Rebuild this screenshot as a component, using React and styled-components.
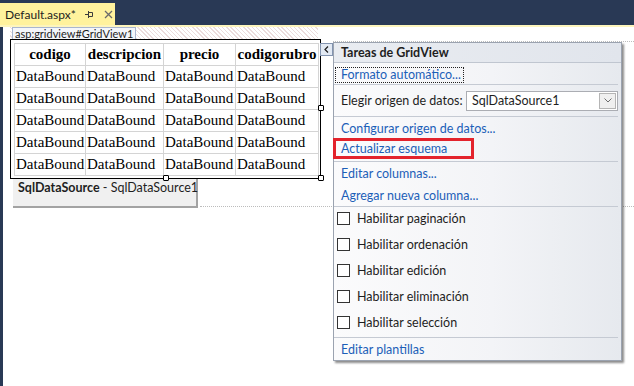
import React from 'react';
import styled, { createGlobalStyle } from 'styled-components';

const colors = {
  chrome: '#293955',
  tab: '#fff29d',
  link: '#1c5fb8',
  text: '#1e1e1e',
  cellBorder: '#d4d4d4',
  sep: '#c5cad3',
};

const uiFont = `Lato, "Noto Sans", sans-serif`;

const GlobalStyle = createGlobalStyle`
  html, body {
    margin: 0;
    padding: 0;
    background: #fff;
  }
  body {
    font-family: ${uiFont};
    width: 634px;
    height: 386px;
    overflow: hidden;
  }
`;

const Window = styled.div`
  width: 634px;
  height: 386px;
  display: flex;
  flex-direction: column;
  background: #fff;
`;

const TitleStrip = styled.div`
  height: 25px;
  background: ${colors.chrome};
  display: flex;
  align-items: flex-end;
`;

const Tab = styled.div`
  height: 22px;
  width: 115px;
  box-sizing: border-box;
  background: ${colors.tab};
  display: flex;
  align-items: center;
  padding: 0 0 0 5px;
  font-size: 12px;
  color: ${colors.text};
  white-space: nowrap;
`;

const TabTitle = styled.span`
  margin-right: 9px;
`;

const TabIcon = styled.svg`
  display: block;
  margin-right: ${p => p.gap || 0}px;
`;

const TabRule = styled.div`
  height: 2px;
  background: #fdf5bd;
`;

const Surface = styled.div`
  flex: 1;
  position: relative;
  border-left: 3px solid ${colors.chrome};
  padding-left: 7px;
`;

const Hatch = styled.div`
  width: 308px;
  height: 12px;
  background: repeating-linear-gradient(
    45deg,
    #fff 0px,
    #fff 2px,
    #ecdcdc 2px,
    #ecdcdc 3px
  );
`;

const ControlTag = styled.div`
  display: inline-block;
  margin-left: 2px;
  height: 12px;
  box-sizing: border-box;
  padding: 0 2px 0 2px;
  background: #f4f6fa;
  border: 1px solid #a9b6cf;
  border-bottom: none;
  font-size: 11px;
  line-height: 11px;
  color: ${colors.text};
  vertical-align: top;
  white-space: nowrap;
`;

const FrameRow = styled.div`
  display: flex;
`;

const Frame = styled.div`
  position: relative;
  width: 311px;
  box-sizing: border-box;
  border: 1px solid #000;
  padding: 3px 3px 2px 3px;
`;

const Filler = styled.div`
  flex: 1;
  margin-top: 2px;
  margin-left: 12px;
  border-top: 1px dotted #bcbcbc;
`;

const Handle = styled.div`
  position: absolute;
  width: 6px;
  height: 6px;
  box-sizing: border-box;
  background: #fff;
  border: 1px solid #000;
  border-radius: 1px;
  left: ${p => p.x}px;
  top: ${p => p.y}px;
`;

const Grid = styled.table`
  border-collapse: collapse;
  table-layout: fixed;
  width: 304px;
  font-family: "Liberation Serif", "Times New Roman", serif;
  font-size: 15px;
  color: #000;
`;

const HeadCell = styled.th`
  border: 1px solid ${colors.cellBorder};
  height: 21px;
  padding: 0;
  text-align: center;
  font-weight: bold;
  white-space: nowrap;
  overflow: visible;
`;

const Cell = styled.td`
  border: 1px solid ${colors.cellBorder};
  height: 21px;
  padding: 0 0 0 1px;
  text-align: left;
  white-space: nowrap;
  overflow: visible;
`;

const SourceRow = styled.div`
  display: flex;
`;

const SourceBox = styled.div`
  margin-left: 3px;
  width: 185px;
  height: 29px;
  box-sizing: border-box;
  background: #f0f0f0;
  border-right: 2px solid #a3a3a3;
  border-bottom: 2px solid #a3a3a3;
  padding: 0 0 0 5px;
  font-size: 12.5px;
  line-height: 18px;
  color: ${colors.text};
  white-space: nowrap;
  b {
    font-weight: bold;
  }
`;

const SourceFiller = styled.div`
  flex: 1;
  margin-left: 2px;
  border-bottom: 1px dotted #bcbcbc;
  margin-bottom: 1px;
`;

const SmartTag = styled.div`
  position: absolute;
  left: 317px;
  top: 15px;
  display: flex;
  align-items: flex-start;
`;

const TagButton = styled.div`
  width: 13px;
  height: 13px;
  margin-top: 1px;
  box-sizing: border-box;
  background: #e2e9f3;
  border: 1px solid #8394b0;
  display: flex;
  align-items: center;
  justify-content: center;
`;

const Panel = styled.div`
  width: 289px;
  box-sizing: border-box;
  border: 1px solid #9ba3b0;
  background: linear-gradient(to right, #fbfbfc 0%, #f3f4f7 55%, #e6e9ee 100%);
  box-shadow: 2px 2px 2px rgba(0, 0, 0, 0.45);
  font-size: 12.5px;
  color: ${colors.text};
  white-space: nowrap;
`;

const PanelHeader = styled.div`
  height: 19px;
  line-height: 19px;
  padding-left: 7px;
  background: linear-gradient(to right, #e9ecf1, #e1e5ec);
  border-bottom: 1px solid #c0c6d0;
  font-weight: bold;
`;

const Section = styled.div`
  display: flex;
  flex-direction: column;
  border-top: ${p => (p.first ? 'none' : `1px solid ${colors.sep}`)};
  margin-right: 3px;
`;

const LinkRow = styled.div`
  height: 22px;
  display: flex;
  align-items: center;
  padding-left: 7px;
  color: ${colors.link};
`;

const FocusLink = styled.div`
  align-self: flex-start;
  margin: 4px 0 1px 1px;
  height: 16px;
  box-sizing: border-box;
  border: 1px dotted #222;
  padding: 0 2px 0 5px;
  line-height: 14px;
  color: ${colors.link};
`;

const MarkedLink = styled.div`
  align-self: flex-start;
  width: 141px;
  height: 21px;
  box-sizing: border-box;
  margin: -1px 0 2px -1px;
  border: 3px solid #e3232c;
  padding-left: 5px;
  display: flex;
  align-items: center;
  color: ${colors.link};
`;

const SelectRow = styled.div`
  height: 31px;
  display: flex;
  align-items: center;
  justify-content: space-between;
  padding-left: 7px;
`;

const Select = styled.div`
  width: 152px;
  height: 20px;
  box-sizing: border-box;
  border: 1px solid #abadb3;
  background: #fff;
  display: flex;
  align-items: center;
  justify-content: space-between;
  padding: 0 1px 0 5px;
`;

const SelectButton = styled.div`
  width: 17px;
  height: 16px;
  box-sizing: border-box;
  border: 1px solid #b5b5b5;
  background: #f0f0f0;
  display: flex;
  align-items: center;
  justify-content: center;
`;

const CheckRow = styled.div`
  height: 26px;
  box-sizing: border-box;
  padding: 0 0 4px 3px;
  display: flex;
  align-items: center;
  gap: 7px;
`;

const Box = styled.div`
  width: 13px;
  height: 13px;
  box-sizing: border-box;
  border: 1px solid #333;
  background: #fff;
`;

const columns = [
  { name: 'codigo', width: 71 },
  { name: 'descripcion', width: 78 },
  { name: 'precio', width: 72 },
  { name: 'codigorubro', width: 83 },
];

const options = [
  'Habilitar paginación',
  'Habilitar ordenación',
  'Habilitar edición',
  'Habilitar eliminación',
  'Habilitar selección',
];

const PinIcon = () => (
  <TabIcon gap={10} width="9" height="9" viewBox="0 0 9 9">
    <path d="M0 4.5h3M3.5 1v7M3.5 2.5h4v4h-4" fill="none" stroke="#3c3c3c" strokeWidth="1" />
  </TabIcon>
);

const CloseIcon = () => (
  <TabIcon width="9" height="9" viewBox="0 0 9 9">
    <path d="M1 1l7 7M8 1l-7 7" stroke="#6a6a6a" strokeWidth="1.3" />
  </TabIcon>
);

const GridView = () => (
  <Grid>
    <colgroup>
      {columns.map(c => (
        <col key={c.name} style={{ width: c.width }} />
      ))}
    </colgroup>
    <thead>
      <tr>
        {columns.map(c => (
          <HeadCell key={c.name}>{c.name}</HeadCell>
        ))}
      </tr>
    </thead>
    <tbody>
      {[0, 1, 2, 3, 4].map(r => (
        <tr key={r}>
          {columns.map(c => (
            <Cell key={c.name}>DataBound</Cell>
          ))}
        </tr>
      ))}
    </tbody>
  </Grid>
);

const TasksPanel = () => (
  <SmartTag>
    <TagButton>
      <svg width="5" height="7" viewBox="0 0 5 7">
        <path d="M4 0.5L1 3.5l3 3" fill="none" stroke="#1e1e1e" strokeWidth="1.2" />
      </svg>
    </TagButton>
    <Panel>
      <PanelHeader>Tareas de GridView</PanelHeader>
      <Section first>
        <FocusLink>Formato automático...</FocusLink>
      </Section>
      <Section>
        <SelectRow>
          <span>Elegir origen de datos:</span>
          <Select>
            <span>SqlDataSource1</span>
            <SelectButton>
              <svg width="8" height="5" viewBox="0 0 8 5">
                <path d="M0.5 0.5L4 4l3.5-3.5" fill="none" stroke="#6d6d6d" strokeWidth="1" />
              </svg>
            </SelectButton>
          </Select>
        </SelectRow>
      </Section>
      <Section>
        <LinkRow>Configurar origen de datos...</LinkRow>
        <MarkedLink>Actualizar esquema</MarkedLink>
      </Section>
      <Section>
        <LinkRow>Editar columnas...</LinkRow>
        <LinkRow>Agregar nueva columna...</LinkRow>
      </Section>
      <Section>
        {options.map(o => (
          <CheckRow key={o}>
            <Box />
            <span>{o}</span>
          </CheckRow>
        ))}
      </Section>
      <Section>
        <LinkRow>Editar plantillas</LinkRow>
      </Section>
    </Panel>
  </SmartTag>
);

export default function App() {
  return (
    <Window>
      <GlobalStyle />
      <TitleStrip>
        <Tab>
          <TabTitle>Default.aspx*</TabTitle>
          <PinIcon />
          <CloseIcon />
        </Tab>
      </TitleStrip>
      <TabRule />
      <Surface>
        <Hatch>
          <ControlTag>asp:gridview#GridView1</ControlTag>
        </Hatch>
        <FrameRow>
          <Frame>
            <GridView />
            <Handle x={307} y={65} />
            <Handle x={152} y={135} />
            <Handle x={307} y={135} />
          </Frame>
          <Filler />
        </FrameRow>
        <SourceRow>
          <SourceBox>
            <b>SqlDataSource</b> - SqlDataSource1
          </SourceBox>
          <SourceFiller />
        </SourceRow>
        <TasksPanel />
      </Surface>
    </Window>
  );
}
